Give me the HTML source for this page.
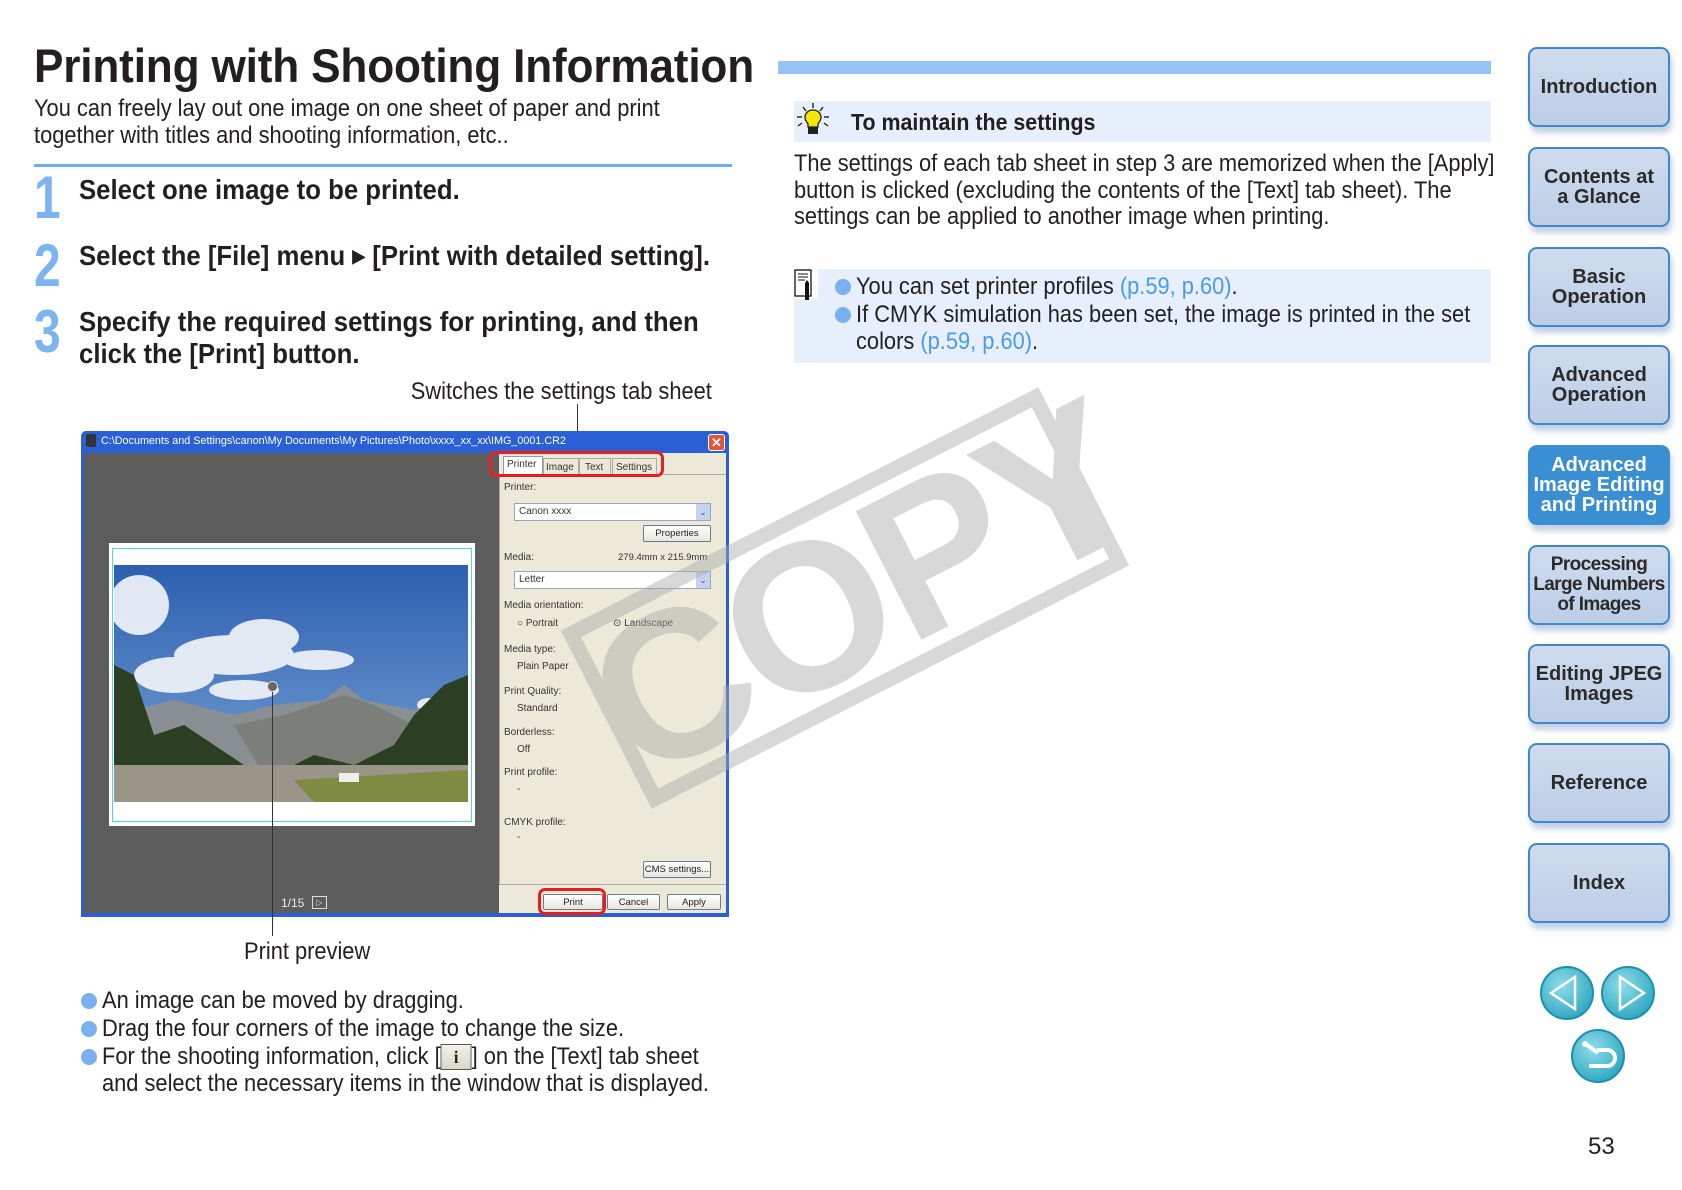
<!DOCTYPE html>
<html><head><meta charset="utf-8">
<style>
*{margin:0;padding:0;box-sizing:border-box}
body{width:1682px;height:1190px;background:#fff;position:relative;overflow:hidden;font-family:"Liberation Sans",sans-serif;color:#231f20}
.a{position:absolute;white-space:nowrap}
.w{font-family:"Liberation Sans",sans-serif}
.step{font-weight:bold;font-size:28px;transform:scaleX(.92);transform-origin:0 0}
.num{color:#7bb4ee;font-weight:bold;font-size:60px;transform:scaleX(.8);transform-origin:0 0}
.body{font-size:24px;transform:scaleX(.91);transform-origin:0 0}
.dot{position:absolute;width:16px;height:16px;border-radius:50%;background:#78b0f0}
.lnk{color:#4a9be8}
.nav{position:absolute;left:1528px;width:142px;height:80px;border:2px solid #3f88c8;border-radius:9px;background:linear-gradient(#cfdcee,#bccde6);box-shadow:2px 6px 6px rgba(80,120,180,.35);display:flex;align-items:center;justify-content:center;text-align:center;font-family:"Liberation Sans",sans-serif;font-weight:bold;font-size:20px;line-height:20px;color:#2a2a2a;white-space:nowrap}
.nav.act{background:#3a8fd2;color:#fff;border-color:#3a8fd2}
.panel{font-family:"Liberation Sans",sans-serif;font-size:10px;color:#333;white-space:nowrap}
.btn{position:absolute;border:1px solid #6a7b94;border-radius:2px;background:linear-gradient(#fff,#e8e6dc);font-size:9.5px;text-align:center;line-height:15px;color:#222;white-space:nowrap;overflow:hidden}
.combo{position:absolute;background:#fff;border:1px solid #9aa8bf;font-size:10px;line-height:16px;padding-left:4px}
.combo i{position:absolute;right:0;top:0;width:14px;height:100%;background:#c6d3f0;font-style:normal;font-size:9px;text-align:center;color:#3a4f8a}
</style></head><body>

<div class="a" style="left:34px;top:38px;font-size:47px;font-weight:bold;letter-spacing:-0.2px;transform:scaleX(.94);transform-origin:0 0">Printing with Shooting Information</div>
<div class="a body" style="left:34px;top:95px;line-height:27px">You can freely lay out one image on one sheet of paper and print<br>together with titles and shooting information, etc..</div>
<div class="a" style="left:34px;top:164px;width:698px;height:3px;background:#6eaeee"></div>
<div class="a" style="left:778px;top:61px;width:713px;height:13px;background:#95c3f5"></div>

<div class="a num" style="left:34px;top:168px;line-height:60px">1</div>
<div class="a step" style="left:79px;top:174px">Select one image to be printed.</div>
<div class="a num" style="left:34px;top:236px;line-height:60px">2</div>
<div class="a step" style="left:79px;top:240px">Select the [File] menu <span style="font-size:18px;position:relative;top:-3px">&#9654;</span> [Print with detailed setting].</div>
<div class="a num" style="left:34px;top:302px;line-height:60px">3</div>
<div class="a step" style="left:79px;top:306px;line-height:32px">Specify the required settings for printing, and then<br>click the [Print] button.</div>

<div class="a body" style="right:970px;top:378px;transform-origin:100% 0">Switches the settings tab sheet</div>
<div class="a" style="left:577px;top:404px;width:1px;height:50px;background:#333"></div>

<!-- window -->
<div class="a" style="left:81px;top:431px;width:648px;height:486px;background:#2b5fd6;border-radius:5px 5px 0 0">
  <div class="a" style="left:5px;top:3px;width:10px;height:13px;background:#333;border-radius:2px"></div>
  <div class="a panel" style="left:20px;top:4px;color:#fff;font-size:11px;transform:scaleX(.98);transform-origin:0 0">C:\Documents and Settings\canon\My Documents\My Pictures\Photo\xxxx_xx_xx\IMG_0001.CR2</div>
  <div class="a" style="left:627px;top:3px;width:17px;height:17px;background:#e0583a;border:1px solid #fff;border-radius:3px;color:#fff;font:bold 13px/15px 'Liberation Sans',sans-serif;text-align:center">✕</div>
  <div class="a" style="left:3px;top:22px;width:415px;height:460px;background:#5d5d5d"></div>
  <div class="a" style="left:418px;top:22px;width:227px;height:460px;background:#ece9d8"></div>
</div>
<!-- paper -->
<div class="a" style="left:109px;top:543px;width:366px;height:283px;background:#fff"></div>
<div class="a" style="left:112px;top:548px;width:360px;height:274px;border:1px solid #4fd6e0"></div>
<svg class="a" style="left:114px;top:565px" width="354" height="237" viewBox="0 0 354 237">
 <defs><linearGradient id="sky" x1="0" y1="0" x2="0" y2="1"><stop offset="0" stop-color="#2c5fb0"/><stop offset="1" stop-color="#7aa3d4"/></linearGradient></defs>
 <rect width="354" height="237" fill="url(#sky)"/>
 <g fill="#f4f6fa" opacity=".9"><ellipse cx="25" cy="40" rx="30" ry="30"/><ellipse cx="120" cy="90" rx="60" ry="20"/><ellipse cx="150" cy="72" rx="35" ry="18"/><ellipse cx="205" cy="95" rx="35" ry="10"/><ellipse cx="130" cy="125" rx="35" ry="10"/><ellipse cx="60" cy="110" rx="40" ry="18"/><ellipse cx="315" cy="140" rx="12" ry="7"/></g>
 <polygon points="0,150 60,135 120,150 160,140 210,135 230,120 250,135 300,145 354,130 354,237 0,237" fill="#8a8f94"/>
 <polygon points="120,160 170,150 230,130 260,140 320,170 300,210 150,210" fill="#7c7e7a"/>
 <polygon points="0,100 20,110 40,170 70,160 100,180 130,200 160,210 200,190 240,200 280,180 300,150 330,120 354,110 354,237 0,237" fill="#2c3f22"/>
 <rect y="200" width="354" height="37" fill="#9a9588"/>
 <polygon points="180,215 354,205 354,237 200,237" fill="#7f8a42"/>
 <rect x="225" y="208" width="20" height="9" fill="#eee"/>
</svg>
<div class="a" style="left:272px;top:686px;width:1px;height:250px;background:#333"></div>
<div class="a" style="left:267px;top:681px;width:11px;height:11px;border-radius:50%;background:#666;border:1px solid #ddd"></div>
<div class="a panel" style="left:281px;top:896px;color:#eee;font-size:12px">1/15</div>
<div class="a" style="left:312px;top:896px;width:15px;height:13px;border:1px solid #ddd;color:#ddd;font-size:8px;line-height:11px;text-align:center">▷</div>

<!-- right panel -->
<div class="a" style="left:499px;top:474px;width:227px;height:411px;border:1px solid #aaa;border-right:none"></div>
<div class="a panel" style="left:503px;top:456px;width:40px;height:19px;background:#fff;border:1px solid #999;border-bottom:none;padding:2px 3px">Printer</div>
<div class="a panel" style="left:543px;top:458px;width:36px;height:17px;border:1px solid #aaa;padding:3px 2px">Image</div>
<div class="a panel" style="left:579px;top:458px;width:32px;height:17px;border:1px solid #aaa;padding:3px 5px">Text</div>
<div class="a panel" style="left:612px;top:458px;width:45px;height:17px;border:1px solid #aaa;padding:3px 3px">Settings</div>
<div class="a" style="left:489px;top:451px;width:175px;height:26px;border:3px solid #e4201f;border-radius:7px"></div>

<div class="a panel" style="left:504px;top:482px">Printer:</div>
<div class="combo panel" style="left:514px;top:503px;width:197px;height:18px">Canon xxxx<i>⌄</i></div>
<div class="btn panel" style="left:643px;top:525px;width:68px;height:17px">Properties</div>
<div class="a panel" style="left:504px;top:552px">Media:</div>
<div class="a panel" style="left:618px;top:552px;font-size:9.5px">279.4mm x 215.9mm</div>
<div class="combo panel" style="left:514px;top:571px;width:197px;height:18px">Letter<i>⌄</i></div>
<div class="a panel" style="left:504px;top:600px">Media orientation:</div>
<div class="a panel" style="left:517px;top:618px">○ Portrait</div>
<div class="a panel" style="left:613px;top:618px">⊙ Landscape</div>
<div class="a panel" style="left:504px;top:644px">Media type:</div>
<div class="a panel" style="left:517px;top:661px">Plain Paper</div>
<div class="a panel" style="left:504px;top:686px">Print Quality:</div>
<div class="a panel" style="left:517px;top:703px">Standard</div>
<div class="a panel" style="left:504px;top:727px">Borderless:</div>
<div class="a panel" style="left:517px;top:744px">Off</div>
<div class="a panel" style="left:504px;top:767px">Print profile:</div>
<div class="a panel" style="left:517px;top:784px">-</div>
<div class="a panel" style="left:504px;top:817px">CMYK profile:</div>
<div class="a panel" style="left:517px;top:832px">-</div>
<div class="btn panel" style="left:643px;top:861px;width:68px;height:17px">CMS settings...</div>
<div class="btn panel" style="left:543px;top:894px;width:60px;height:16px">Print</div>
<div class="btn panel" style="left:607px;top:894px;width:53px;height:16px">Cancel</div>
<div class="btn panel" style="left:667px;top:894px;width:54px;height:16px">Apply</div>
<div class="a" style="left:538px;top:888px;width:68px;height:27px;border:3px solid #e4201f;border-radius:7px"></div>

<div class="a body" style="left:244px;top:938px">Print preview</div>

<div class="dot" style="left:81px;top:993px"></div>
<div class="a body" style="left:102px;top:987px">An image can be moved by dragging.</div>
<div class="dot" style="left:81px;top:1021px"></div>
<div class="a body" style="left:102px;top:1015px">Drag the four corners of the image to change the size.</div>
<div class="dot" style="left:81px;top:1049px"></div>
<div class="a body" style="left:102px;top:1043px;line-height:27px">For the shooting information, click [<span style="display:inline-block;width:34px;height:26px;line-height:24px;vertical-align:top;margin-top:1px;border:1px solid #555;background:linear-gradient(#f4f3ea,#d8d6c8);text-align:center;font-weight:bold;font-size:18px;font-family:'Liberation Serif',serif">i</span>] on the [Text] tab sheet<br>and select the necessary items in the window that is displayed.</div>

<!-- tip -->
<div class="a" style="left:794px;top:101px;width:697px;height:41px;background:#e6effb"></div>
<svg class="a" style="left:794px;top:101px" width="38" height="38" viewBox="0 0 38 38">
 <g stroke="#222" stroke-width="1.4"><line x1="19" y1="2" x2="19" y2="7"/><line x1="9" y1="6" x2="12" y2="10"/><line x1="29" y1="6" x2="26" y2="10"/><line x1="3" y1="16" x2="8" y2="16"/><line x1="30" y1="16" x2="35" y2="16"/><line x1="4" y1="25" x2="8" y2="22"/><line x1="34" y1="25" x2="30" y2="22"/></g>
 <path d="M19 9c-5 0-8 3.5-8 7.5 0 3 2 4.5 3 6.5v3h10v-3c1-2 3-3.5 3-6.5 0-4-3-7.5-8-7.5z" fill="#f4e600" stroke="#222" stroke-width="1.3"/>
 <rect x="14" y="26" width="10" height="7" fill="#222"/>
</svg>
<div class="a" style="left:851px;top:109px;font-size:23px;font-weight:bold;transform:scaleX(.93);transform-origin:0 0">To maintain the settings</div>
<div class="a body" style="left:794px;top:151px;line-height:26.5px">The settings of each tab sheet in step 3 are memorized when the [Apply]<br>button is clicked (excluding the contents of the [Text] tab sheet). The<br>settings can be applied to another image when printing.</div>

<!-- note -->
<div class="a" style="left:794px;top:269px;width:697px;height:94px;background:#e6effb"></div>
<div class="a" style="left:794px;top:269px;width:24px;height:30px;background:#fff"></div>
<svg class="a" style="left:794px;top:269px" width="24" height="32" viewBox="0 0 24 32">
 <rect x="1" y="1" width="16" height="26" fill="#fff" stroke="#111" stroke-width="1.3"/>
 <g stroke="#111" stroke-width="1"><line x1="4" y1="5" x2="14" y2="5"/><line x1="4" y1="8" x2="14" y2="8"/><line x1="4" y1="11" x2="11" y2="11"/></g>
 <path d="M11 14l2-3 2 3v17h-4z" fill="#111"/>
</svg>
<div class="dot" style="left:835px;top:279px"></div>
<div class="a body" style="left:856px;top:273px">You can set printer profiles <span class="lnk">(p.59, p.60)</span>.</div>
<div class="dot" style="left:835px;top:307px"></div>
<div class="a body" style="left:856px;top:301px;line-height:27px">If CMYK simulation has been set, the image is printed in the set<br>colors <span class="lnk">(p.59, p.60)</span>.</div>

<!-- watermark -->
<div class="a" style="left:577px;top:498px;width:536px;height:200px;transform:rotate(-27deg);transform-origin:center;opacity:.45">
 <div style="position:absolute;inset:0;border:15px solid #a9a9a9"></div>
 <div style="position:absolute;left:0;top:-8px;width:100%;text-align:center;font:bold 210px/216px 'Liberation Sans',sans-serif;color:#a9a9a9;letter-spacing:-6px">COPY</div>
</div>

<!-- nav -->
<div class="nav" style="top:47px">Introduction</div>
<div class="nav" style="top:147px">Contents at<br>a Glance</div>
<div class="nav" style="top:247px">Basic<br>Operation</div>
<div class="nav" style="top:345px">Advanced<br>Operation</div>
<div class="nav act" style="top:445px">Advanced<br>Image Editing<br>and Printing</div>
<div class="nav" style="top:545px;font-size:19px;letter-spacing:-0.6px">Processing<br>Large Numbers<br>of Images</div>
<div class="nav" style="top:644px">Editing JPEG<br>Images</div>
<div class="nav" style="top:743px">Reference</div>
<div class="nav" style="top:843px">Index</div>

<svg class="a" style="left:1535px;top:960px" width="130" height="125" viewBox="0 0 130 125">
 <defs><radialGradient id="g" cx=".4" cy=".35" r=".7"><stop offset="0" stop-color="#8fdde8"/><stop offset="1" stop-color="#2aa6c0"/></radialGradient></defs>
 <circle cx="32" cy="33" r="26" fill="url(#g)" stroke="#1f8fae" stroke-width="2"/>
 <polygon points="16,33 40,17 40,49" fill="none" stroke="#fff" stroke-width="2.5"/>
 <circle cx="93" cy="33" r="26" fill="url(#g)" stroke="#1f8fae" stroke-width="2"/>
 <polygon points="109,33 85,17 85,49" fill="none" stroke="#fff" stroke-width="2.5"/>
 <circle cx="63" cy="96" r="26" fill="url(#g)" stroke="#1f8fae" stroke-width="2"/>
 <path d="M52 85 L63 93 M54 106 H72 A8 8 0 0 0 72 90 H62" fill="none" stroke="#fff" stroke-width="4"/>
 <circle cx="50" cy="84" r="3" fill="#fff"/>
</svg>

<div class="a w" style="left:1588px;top:1133px;font-size:24px">53</div>
</body></html>
